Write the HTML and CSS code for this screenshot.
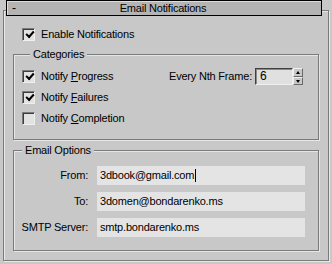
FILE: index.html
```html
<!DOCTYPE html>
<html lang="en">
<head>
  <meta charset="UTF-8" />
  <title>Email Notifications</title>
  <link rel="stylesheet" href="styles.css">
</head>
<body>

  <div class="rollout">
    <div class="rollout-title">
      <span class="toggle">-</span>
      <span class="title-text">Email Notifications</span>
    </div>

    <div class="rollout-body">
      <label class="check-row enable-row">
        <span class="checkbox checked"></span>
        <span>Enable Notifications</span>
      </label>

      <fieldset class="group categories">
        <legend>Categories</legend>
        <div class="cat-row">
          <label class="check-row"><span class="checkbox checked"></span><span>Notify <u>P</u>rogress</span></label>
          <div class="nth-frame">
            <span>Every Nth Frame:</span>
            <div class="spinner">
              <span class="spinner-value">6</span>
              <span class="spinner-arrows">
                <span class="arrow up"></span>
                <span class="arrow down"></span>
              </span>
            </div>
          </div>
        </div>
        <div class="cat-row">
          <label class="check-row"><span class="checkbox checked"></span><span>Notify <u>F</u>ailures</span></label>
        </div>
        <div class="cat-row">
          <label class="check-row"><span class="checkbox"></span><span>Notify <u>C</u>ompletion</span></label>
        </div>
      </fieldset>

      <fieldset class="group email-options">
        <legend>Email Options</legend>
        <div class="field-grid">
          <span class="field-label">From:</span>
          <span class="field">3dbook@gmail.com<span class="caret"></span></span>
          <span class="field-label">To:</span>
          <span class="field">3domen@bondarenko.ms</span>
          <span class="field-label">SMTP Server:</span>
          <span class="field">smtp.bondarenko.ms</span>
        </div>
      </fieldset>
    </div>
  </div>

</body>
</html>
```

FILE: styles.css
```css
body {
  margin: 0;
  background-color: #c8c8c8;
  color: #000;
  font-family: "Liberation Sans", Arial, sans-serif;
  font-size: 11px;
  letter-spacing: -0.2px;
  line-height: 13px;
}

.rollout {
  width: 332px;
  height: 264px;
}

/* title bar of the rollout */
.rollout-title {
  position: relative;
  z-index: 2;
  margin-left: 6px;
  width: 316px;
  height: 16px;
  box-sizing: border-box;
  border: 1px solid #000;
  background: #b4b4b4;
  box-shadow: inset 1px 1px 0 #dcdcdc;
  display: flex;
  align-items: center;
}

.toggle {
  width: 14px;
  padding-left: 5px;
  box-sizing: border-box;
  font-size: 12px;
}

.title-text {
  flex: 1;
  text-align: center;
  padding-right: 16px;
  font-size: 11px;
}

.rollout-body {
  margin: -6px 3px 0;
  height: 251px;
  box-sizing: border-box;
  border: 1px solid #7a7a7a;
  box-shadow: inset 1px 1px 0 #e8e8e8, 1px 1px 0 #e8e8e8;
  padding: 17px 9px 0;
}

.check-row {
  display: flex;
  align-items: center;
  gap: 6px;
  height: 13px;
  white-space: nowrap;
}

.enable-row {
  margin-left: 9px;
}

.checkbox {
  width: 13px;
  height: 13px;
  box-sizing: border-box;
  border: 1px solid;
  border-color: #7a7a7a #f0f0f0 #f0f0f0 #7a7a7a;
  box-shadow: inset 1px 1px 0 #3c3c3c;
  background: #e2e2e2;
  flex-shrink: 0;
  position: relative;
}

.checkbox.checked::after {
  content: "";
  position: absolute;
  left: 3px;
  top: 2px;
  width: 6px;
  height: 3px;
  border-left: 2px solid #000;
  border-bottom: 2px solid #000;
  transform: rotate(-48deg);
}

/* group boxes */
.group {
  margin: 0;
  border: 1px solid #7a7a7a;
  box-shadow: inset 1px 1px 0 #e6e6e6, 1px 1px 0 #e6e6e6;
  padding: 0;
  min-width: 0;
}

.group legend {
  margin-left: 8px;
  padding: 0 3px;
  background: #c8c8c8;
  line-height: 13px;
}

.categories {
  margin-top: 7px;
  padding: 5px 15px 10px 8px;
}

.cat-row {
  display: flex;
  align-items: center;
  justify-content: space-between;
  height: 21px;
}

.nth-frame {
  display: flex;
  align-items: center;
  gap: 3px;
}

.spinner {
  display: flex;
  height: 17px;
}

.spinner-value {
  width: 38px;
  box-sizing: border-box;
  border: 1px solid;
  border-color: #404040 #f0f0f0 #f0f0f0 #404040;
  box-shadow: inset 1px 1px 0 #8a8a8a;
  background: #e0e0e0;
  padding: 1px 0 0 4px;
  font-size: 12px;
}

.spinner-arrows {
  width: 10px;
  display: flex;
  flex-direction: column;
}

.arrow {
  flex: 1;
  box-sizing: border-box;
  border: 1px solid;
  border-color: #f0f0f0 #6a6a6a #6a6a6a #f0f0f0;
  background: #c8c8c8;
  position: relative;
}

.arrow::after {
  content: "";
  position: absolute;
  left: 2px;
  border-left: 2px solid transparent;
  border-right: 2px solid transparent;
}

.arrow.up::after {
  top: 2px;
  border-bottom: 3px solid #000;
}

.arrow.down::after {
  top: 2px;
  border-top: 3px solid #000;
}

.email-options {
  margin-top: 4px;
  padding: 9px 13px 13px 0;
}

.field-grid {
  display: grid;
  grid-template-columns: 74px 1fr;
  column-gap: 9px;
  row-gap: 7px;
  align-items: center;
}

.field-label {
  text-align: right;
}

.field {
  height: 19px;
  box-sizing: border-box;
  background: #e4e4e4;
  padding: 3px 0 0 3px;
  display: flex;
  align-items: flex-start;
}

.caret {
  width: 1px;
  height: 13px;
  background: #000;
  margin-left: 1px;
}
```
